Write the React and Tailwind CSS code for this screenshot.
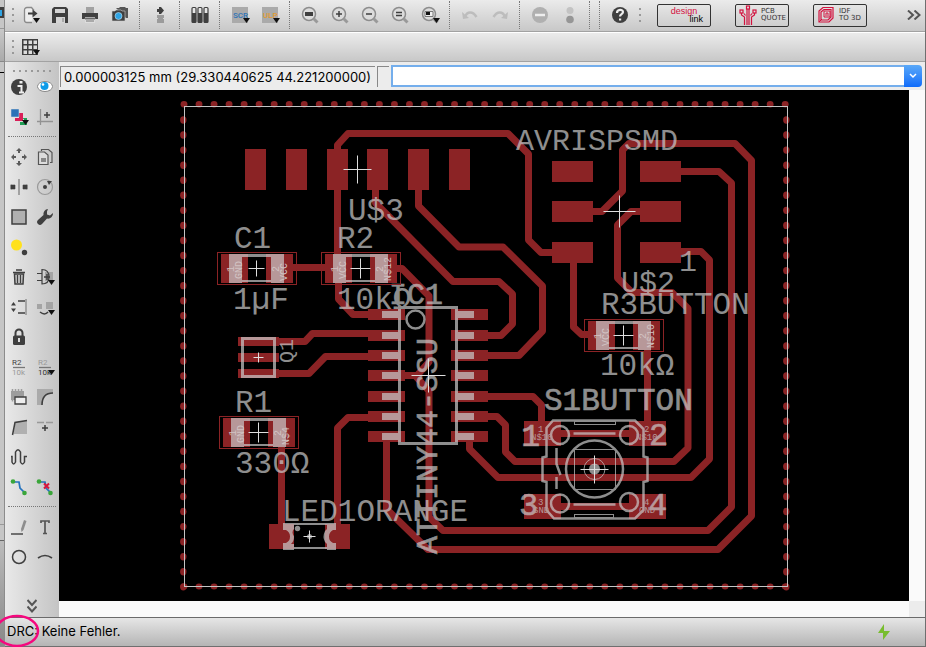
import React, { useState } from 'react';

const DARK = '#3f3f3f';
const COPPER = '#8b2325';
const SILK = '#cacaca';

const Arrow = () => <path d="M15 15h7l-3.500 5z" fill="#111" />;

const Lens = ({ children }) => (
  <>
    <circle cx="11" cy="11" r="6.500" fill="#dcdcdc" stroke="#8d8d8d" strokeWidth="1.500" />
    <path d="M15.500 15.500l4 4" stroke="#999" strokeWidth="3" />
    {children}
  </>
);

const icons = {
  open: (
    <>
      <path d="M16 7.500L13.500 4.500H9A2.500 2.500 0 0 0 6.500 7v10A2.500 2.500 0 0 0 9 19.500h5" fill="#eee" stroke="#8a8a8a" strokeWidth="1.300" />
      <path d="M10 10.500h5" stroke={DARK} strokeWidth="2" />
      <path d="M14.500 6.500l5 4-5 4z" fill={DARK} />
      <Arrow />
    </>
  ),
  save: (
    <>
      <path d="M6 4h12l2 2v14H4V6z" fill={DARK} />
      <path d="M7 6h10v4H7zM8 14h9v6H8z" fill="#d5d5d5" />
      <path d="M14 15h2v4h-2z" fill="#aaa" />
    </>
  ),
  print: (
    <>
      <path d="M8 4h8v6H8z" fill="#a2a2a2" />
      <path d="M4 10h16v6H4z" fill={DARK} />
      <path d="M7 14h10v6H7z" fill="#ddd" />
      <path d="M7 15h10v1H7zM8 18h8" fill={DARK} stroke="#777" />
    </>
  ),
  camera: (
    <>
      <path d="M8 5h3l1-1h5l1 1h2v10h-2" fill="#555" />
      <path d="M4 8h3l1-1h5l1 1h3v10H4z" fill={DARK} stroke="#ccc" strokeWidth=".600" />
      <circle cx="10.500" cy="13" r="3.500" fill="#2fa4e4" stroke="#c9e4f4" strokeWidth=".600" />
    </>
  ),
  board: (
    <>
      <path d="M9 6h2V4h2l3 3.500-3 3.500h-2V9H9z" fill={DARK} />
      <path d="M9 12h7v3H9zM9 16h7v4H9z" fill="#9b9b9b" />
      <path d="M10 14.500h5v2h-5z" fill="#9b9b9b" />
    </>
  ),
  library: (
    <>
      {[5, 11, 17].map(x => (
        <g key={x}>
          <rect x={x - 1} y="4.500" width="4" height="15" rx="1" fill="#e6e6e6" stroke={DARK} strokeWidth="1.200" />
          <rect x={x - 1} y="10" width="4" height="9.500" fill={DARK} />
        </g>
      ))}
    </>
  ),
  scr: (
    <>
      <path d="M4 4h16v16H4z" fill="#aaa" />
      <text x="5" y="15" fontSize="8" fontWeight="500" fill="#2b73b8" fontFamily="Roboto, sans-serif">SCR</text>
      <Arrow />
    </>
  ),
  ulp: (
    <>
      <path d="M4 4h16v16H4z" fill="#aaa" />
      <text x="5" y="15" fontSize="8" fontWeight="500" fill="#e39a2d" fontFamily="Roboto, sans-serif">ULP</text>
      <Arrow />
    </>
  ),
  zoomFit: <Lens><path d="M7 9h8v4H7z" fill={DARK} /></Lens>,
  zoomIn: <Lens><path d="M8 11h6M11 8v6" stroke={DARK} strokeWidth="1.500" /></Lens>,
  zoomOut: <Lens><path d="M8 11h6" stroke={DARK} strokeWidth="1.500" /></Lens>,
  zoomRedraw: <Lens><path d="M8 9.500h6M8 12.500h6" stroke={DARK} strokeWidth="1.300" /></Lens>,
  zoomSelect: (
    <>
      <Lens><path d="M7 8.500h8v5H7z" fill="#eee" stroke="#777" /><path d="M8 9h4v3H8z" fill="#111" /></Lens>
      <Arrow />
    </>
  ),
  undo: (
    <>
      <path d="M4 9l1 7 6-1z" fill="#bdbdbd" />
      <path d="M7 14c2-6 8-6 11.500 0" fill="none" stroke="#bdbdbd" strokeWidth="2.500" />
    </>
  ),
  redo: (
    <>
      <path d="M20 9l-1 7-6-1z" fill="#bdbdbd" />
      <path d="M17 14c-2-6-8-6-11.500 0" fill="none" stroke="#bdbdbd" strokeWidth="2.500" />
    </>
  ),
  stop: (
    <>
      <circle cx="12" cy="12" r="8" fill="#b0b0b0" />
      <path d="M7 12h10" stroke="#eee" strokeWidth="2.500" />
    </>
  ),
  go: (
    <>
      <circle cx="12" cy="7.500" r="3.500" fill="#c3c3c3" />
      <circle cx="12" cy="16.500" r="3.800" fill="#969696" />
    </>
  ),
  help: (
    <>
      <circle cx="12" cy="12" r="8" fill={DARK} />
      <path d="M9 10c0-4 6-4 6-1 0 2.200-3 2-3 4.500" fill="none" stroke="#eee" strokeWidth="2.200" />
      <path d="M11 15.500h2.200v2H11z" fill="#eee" />
    </>
  ),
  grid: (
    <>
      <path d="M4 4h16v16H4z" fill={DARK} />
      {[6, 11, 16].map(x => [6, 11, 16].map(y => (
        <rect key={`${x}-${y}`} x={x - 0.5} y={y - 0.5} width="3.500" height="3.500" fill="#ddd" />
      )))}
      <Arrow />
    </>
  ),
  info: (
    <>
      <circle cx="12" cy="12" r="8" fill={DARK} />
      <path d="M12.500 6h3v2.500h-3z" fill="#eee" />
      <path d="M10.500 11h4v6M12 17.500h5" fill="none" stroke="#eee" strokeWidth="2" />
    </>
  ),
  show: (
    <>
      <ellipse cx="12" cy="11.500" rx="7.500" ry="5" fill="#fff" stroke="#888" />
      <circle cx="11.500" cy="11" r="4" fill="#0d9be8" />
      <circle cx="10" cy="9.500" r="1.300" fill="#fff" />
    </>
  ),
  layers: (
    <>
      <path d="M13 14h4v3h-4v3h7v-7h-3" fill="#1f9d55" />
      <path d="M8 16V13h4V8h4v8z" fill="#d91f58" />
      <path d="M4 4h8v8H4z" fill="#2b73b8" stroke="#ddd" strokeWidth=".500" />
      <Arrow />
    </>
  ),
  mark: (
    <>
      <path d="M7.500 4v16M4 16.500h16" stroke="#929292" strokeWidth="1.300" />
      <path d="M14 7v6M11 10h6" stroke={DARK} strokeWidth="1.500" />
    </>
  ),
  move: (
    <path d="M12 3l3 3h-2v2h-2V6H9zM12 21l3-3h-2v-2h-2v2H9zM4 12l3-3v2h2v2H7v2zM20 12l-3-3v2h-2v2h2v2z" fill="#5a5a5a" />
  ),
  copy: (
    <>
      <path d="M8.500 6V4.500h7l3.500 3v10H17" fill="#ccc" stroke="#555" strokeWidth="1.200" />
      <path d="M5.500 7h6l3.500 3v9.500H5.500z" fill="#ddd" stroke="#555" strokeWidth="1.200" />
      <path d="M8 13h5v4H8z" fill="#888" />
    </>
  ),
  mirror: (
    <>
      <path d="M4 10h4v4H4zM16 10h4v4h-4zM4 9.500v5M20 9.500v5" fill={DARK} stroke={DARK} strokeWidth=".600" />
      <path d="M12 4v16" stroke="#8d8d8d" strokeWidth="1.500" />
    </>
  ),
  rotate: (
    <>
      <circle cx="12" cy="12" r="7.500" fill="none" stroke="#999" strokeWidth="1.200" />
      <circle cx="12" cy="12" r="2" fill={DARK} />
      <path d="M14 6h5l-3 4z" fill={DARK} />
    </>
  ),
  group: <path d="M5 5h14v14H5z" fill="#b0b0b0" stroke={DARK} strokeWidth="1.500" />,
  change: (
    <path d="M15 4a5 5 0 0 0-4.500 6L5 15a2.500 2.500 0 0 0 4 4l5-5.500a5 5 0 0 0 6-5.500l-3 2.500-3-1V6.500z" fill={DARK} />
  ),
  paste: (
    <>
      <circle cx="9.500" cy="10" r="5.500" fill="#ffe11c" />
      <circle cx="17.500" cy="17.500" r="2.700" fill={DARK} />
    </>
  ),
  trash: (
    <>
      <path d="M9 5h6M6 7.500h12" stroke={DARK} strokeWidth="1.600" />
      <path d="M7.500 9h9l-.500 10h-8z" fill="#ccc" stroke={DARK} strokeWidth="1.500" />
      <path d="M10.500 10v8M13.500 10v8" stroke={DARK} strokeWidth="1.300" />
    </>
  ),
  add: (
    <>
      <path d="M12 7h8v9h-8z" fill="#a4a4a4" />
      <path d="M9 4.500c5 0 7 3 7 7.500s-2 7-7 7zM4 8.500h5M4 15.500h5" fill="none" stroke={DARK} strokeWidth="1.200" />
      <path d="M14 9v6M11 12h6" stroke={DARK} strokeWidth="1.500" />
      <Arrow />
    </>
  ),
  pinswap: (
    <>
      <path d="M4 10.500L6.500 7 9 10.500zM4 13.500L6.500 17 9 13.500z" fill={DARK} />
      <path d="M11 6h8M11 18h8" stroke={DARK} strokeWidth="1.500" />
      <path d="M18 4h2v16h-2z" fill="#a4a4a4" />
    </>
  ),
  replace: (
    <>
      <path d="M4 9h5v5H4zM13 7h7v7h-7z" fill="#a4a4a4" />
      <path d="M7 17c3 2.500 6 2.500 8 0" fill="none" stroke={DARK} strokeWidth="1.500" />
      <Arrow />
    </>
  ),
  lock: (
    <>
      <path d="M8.500 11V8a3.500 3.500 0 0 1 7 0v3" fill="none" stroke={DARK} strokeWidth="2" />
      <rect x="6" y="10.500" width="12" height="9.500" rx="1.500" fill={DARK} />
      <path d="M11 13h2v4h-2z" fill="#ddd" />
    </>
  ),
  name: (
    <>
      <text x="5" y="10" fontSize="8" fill="#444" fontFamily="Roboto, sans-serif">R2</text>
      <path d="M6 12.500h12" stroke="#777" strokeWidth="1.300" />
      <text x="5" y="20" fontSize="8" fill="#999" fontFamily="Roboto, sans-serif">10k</text>
    </>
  ),
  value: (
    <>
      <text x="5" y="10" fontSize="8" fill="#999" fontFamily="Roboto, sans-serif">R2</text>
      <path d="M6 12.500h12" stroke="#777" strokeWidth="1.300" />
      <text x="5" y="20" fontSize="8" fill="#333" fontFamily="Roboto, sans-serif">10k</text>
      <Arrow />
    </>
  ),
  smash: (
    <>
      <path d="M4 6h13v9H4z" fill="#9d9d9d" />
      <path d="M5.500 4v3M8.500 4v3M11.500 4v3M14.500 4v3M5.500 14v2.500" stroke="#9d9d9d" strokeWidth="1.500" />
      <path d="M8 12h11v7H8z" fill="#eee" stroke={DARK} strokeWidth="1.300" />
    </>
  ),
  miter: (
    <>
      <path d="M4 4h16v4C13 8 9 12 9 20H4z" fill="#aaa" />
      <path d="M9 20C9 12 12 8 20 8" fill="none" stroke={DARK} strokeWidth="1.600" />
    </>
  ),
  split: (
    <>
      <path d="M6.500 19l2-12L20 5.500V19z" fill="#b0b0b0" />
      <path d="M5.500 20L8 7.500 20 5.500" fill="none" stroke={DARK} strokeWidth="1.500" />
    </>
  ),
  optimize: (
    <>
      <path d="M4 7.500h7M13 7.500h7" stroke="#999" strokeWidth="1.300" />
      <path d="M12 10v6M9 13h6" stroke={DARK} strokeWidth="1.500" />
    </>
  ),
  meander: (
    <path d="M4 11.500h1V17q1.500 4 3.500 0V7q2.500-4.500 5 0v10q2 4 4 0v-5.500H20" fill="none" stroke={DARK} strokeWidth="1.500" />
  ),
  route: (
    <>
      <path d="M6 7h6l1 6 5 5" fill="none" stroke="#2573bd" strokeWidth="1.700" />
      <circle cx="6" cy="6.500" r="2.300" fill="#3aa63a" />
      <circle cx="17.500" cy="18" r="2.300" fill="#3aa63a" />
    </>
  ),
  ripup: (
    <>
      <path d="M6 7h6l1 6 5 5" fill="none" stroke="#2573bd" strokeWidth="1.700" />
      <circle cx="6" cy="6.500" r="2.300" fill="#3aa63a" />
      <circle cx="17.500" cy="18" r="2.300" fill="#3aa63a" />
      <path d="M11 8.500l5 5M16 8.500l-5 5" stroke="#d9163c" strokeWidth="2" />
    </>
  ),
  wire: (
    <>
      <path d="M4 19h12" stroke={DARK} strokeWidth="1.400" />
      <path d="M17 5l2.500 1-3 9-2 2-.500-3z" fill="#8d8d8d" />
    </>
  ),
  text: <path d="M8 8V6h8v2M12 6v12.500M10 18.500h4" fill="none" stroke="#555" strokeWidth="1.700" />,
  circle: <circle cx="12" cy="12" r="6.500" fill="none" stroke={DARK} strokeWidth="1.500" />,
  arc: <path d="M5 13q7-5 14 0" fill="none" stroke={DARK} strokeWidth="1.700" />,
};

function Icon({ name }) {
  return <svg viewBox="0 0 24 24" className="h-6 w-6 shrink-0" aria-hidden="true">{icons[name]}</svg>;
}

function ToolButton({ name, narrow }) {
  return (
    <button type="button" aria-label={name} className={`flex h-[30px] shrink-0 items-center justify-center ${narrow ? 'w-[26px]' : 'w-[30px]'}`}>
      <Icon name={name} />
    </button>
  );
}

const Separator = () => (
  <div className="flex h-[30px] w-[10px] shrink-0 py-px pl-[4px]">
    <div className="h-full border-l border-dotted border-[#777]" />
  </div>
);

const Grip = () => (
  <div className="flex w-[10px] shrink-0 flex-col items-center gap-[4px]">
    {[0, 1, 2].map(i => <div key={i} className="h-[2px] w-[2px] bg-[#999]" />)}
  </div>
);

const toolGroups = [
  ['open', 'save', 'print', 'camera'],
  ['board'],
  ['library'],
  ['scr', 'ulp'],
  ['zoomFit', 'zoomIn', 'zoomOut', 'zoomRedraw', 'zoomSelect'],
  ['undo', 'redo'],
  ['stop', 'go'],
];

function Toolbar() {
  return (
    <div className="flex h-8 shrink-0 items-center overflow-hidden border-b border-[#a2a2a2] bg-linear-to-b from-[#ebebeb] to-[#c8c8c8] pb-px">
      <div className="flex pl-[3px]"><Grip /></div>
      <div className="flex min-w-0 items-center">
        {toolGroups.map((group, i) => (
          <div key={i} className={i === 0 ? '-ml-[3px] flex' : 'flex'}>
            {group.map(name => <ToolButton key={name} name={name} />)}
            <Separator />
          </div>
        ))}
        <Separator />
        <ToolButton name="help" />
        <Grip />
      </div>
      <div className="ml-[12px] flex gap-6 text-[7px] leading-[7px] text-[#333]">
        <button type="button" className="flex h-[23px] w-[54px] flex-col justify-center rounded-[2px] border border-[#333] px-[7px] font-[Liberation_Sans,sans-serif] text-[9px] leading-[8px]">
          <span className="text-[#d3123f]">design</span>
          <span className="self-end text-black">link</span>
        </button>
        <button type="button" className="flex h-[23px] w-[54px] items-center gap-[4px] rounded-[2px] border border-[#333] pl-[3px] text-left font-[DejaVu_Sans,sans-serif]">
          <svg viewBox="0 0 18 20" className="h-5 w-[18px] shrink-0" fill="none" stroke="#d3123f" strokeWidth="1.200" aria-hidden="true">
            <rect x="1" y="5" width="3" height="3" />
            <rect x="7.500" y="1" width="3" height="3" />
            <rect x="14" y="5" width="3" height="3" />
            <path d="M2.500 8v2l3 2v8M8 4v16M10 4v16M15.500 8v2l-3 2v8M5 8.500l1.500 2M13 8.500l-1.500 2" />
          </svg>
          <span>PCB<br />QUOTE</span>
        </button>
        <button type="button" className="flex h-[23px] w-[54px] items-center gap-[4px] rounded-[2px] border border-[#333] pl-[3px] text-left font-[DejaVu_Sans,sans-serif]">
          <svg viewBox="0 0 18 20" className="h-5 w-[18px] shrink-0" fill="none" stroke="#d3123f" aria-hidden="true">
            <path d="M2 6l4-3.500h10V13l-4 4H2zM4 7l3-2.500h7V12l-3 3H4z" strokeWidth="1.200" />
            <path d="M7 6h6v6H7zM9 8v3M9 8h2v3" />
            <path d="M2 17l3-3" />
          </svg>
          <span>IDF<br />TO 3D</span>
        </button>
      </div>
      <button type="button" aria-label="More tools" className="mr-[4px] ml-auto">
        <svg viewBox="0 0 14 10" className="h-[10px] w-[14px]" fill="none" stroke="#555" strokeWidth="2"><path d="M1 .500L6 5 1 9.500M7.500 .500L12.500 5l-5 4.500" /></svg>
      </button>
    </div>
  );
}

const paletteGroups = [
  ['info', 'show', 'layers', 'mark'],
  ['move', 'copy', 'mirror', 'rotate', 'group', 'change', 'paste', null, 'trash', 'add', 'pinswap', 'replace', 'lock', null,
    'name', 'value', 'smash', 'miter', 'split', 'optimize', 'meander', null, 'route', 'ripup'],
  ['wire', 'text', 'circle', 'arc'],
];

function Palette() {
  return (
    <div className="flex w-[54px] shrink-0 flex-col items-center bg-linear-to-r from-[#e9e9e9] to-[#c4c4c4]">
      <div className="flex h-[10px] items-end gap-[4px]">
        {[0, 1, 2, 3, 4, 5, 6].map(i => <div key={i} className="h-[2px] w-[2px] bg-[#999]" />)}
      </div>
      {paletteGroups.map((group, i) => (
        <React.Fragment key={i}>
          {i > 0 && <div className="h-[10px] w-full px-[3px] pt-[4px]"><div className="w-full border-t border-dotted border-[#777]" /></div>}
          <div className="grid grid-cols-2">
            {group.map((name, j) => (name ? <ToolButton key={name} name={name} narrow /> : <span key={j} />))}
          </div>
        </React.Fragment>
      ))}
      <button type="button" aria-label="More commands" className="mt-auto mb-1">
        <svg viewBox="0 0 10 14" className="h-[14px] w-[10px]" fill="none" stroke="#555" strokeWidth="2"><path d="M.500 1L5 6l4.500-5M.500 7.500L5 12.500l4.500-5" /></svg>
      </button>
    </div>
  );
}

// Copper traces, in board window coordinates
const traces = [
  'M337.500 170V145L348 133.500H508L528.500 154V240L541 252.500H560',
  'M337.500 190V268M338.500 268V299L353 314.500H372',
  'M375.500 188V203L453 281.500H499L512.500 294V324L501 335.500H480',
  'M418.500 188V206L459 247H503L542.500 286V331L519 355.500H480',
  'M290 267.500H327',
  'M395 268.500H402L429 296V362L417 375.500H398M415 375.500L429 391V517L443 530.500H708L731.500 507V183L719 171.500H675',
  'M386.500 440V509L428 549.500H718L751.500 516V160.500L735 143.500H629L622.500 150V191L602 211.500H585',
  'M650 211.500H631L617.500 225V278L632 292.500H672L688 308.500V448L674 461.500H515L505.500 452V425L497 416.500H480',
  'M675 251.500H701L709.500 260V459L691 477.500H498L469.500 449V436',
  'M480 396.500H533L541.500 405V425',
  'M573.500 255V327L581.500 334.500H592',
  'M647.500 335V425',
  'M555 433.500H640M555 506.500H640',
  'M270 341.500H305L312.500 333.500H374M270 373.500H309L325.500 356.500H374',
  'M281.500 430V530',
  'M374 417.500H348L337.500 428V530',
];

const icRows = [309, 330, 350, 370, 391, 411, 431];

const pads = [
  ...[245, 286, 327, 367, 408, 449].map(x => [x, 149, 21, 41]),
  ...[552, 640].flatMap(x => [161, 201, 242].map(y => [x, y, 41, 21])),
  ...icRows.flatMap(y => [[368, y, 37, 11], [451, y, 37, 11]]),
  ...[337, 353, 369].map(y => [238, y, 41, 9]),
  ...[269, 325].map(x => [x, 524, 25, 25]),
  ...[524, 629].flatMap(x => [421, 494].map(y => [x, y, 37, 25])),
];

const chips = [
  { x: 217, y: 252, left: 'GND', right: 'VCC', arm: 8 },
  { x: 321, y: 252, left: 'VCC', right: 'N$12', arm: 10 },
  { x: 219, y: 416, left: 'GND', right: 'N$4', arm: 10 },
  { x: 584, y: 319, left: 'VCC', right: 'N$10', arm: 10 },
];

const labels = [
  { x: 516, y: 150, size: 30, t: 'AVRISPSMD' },
  { x: 348, y: 220, size: 31, t: 'U$3' },
  { x: 621, y: 292, size: 30, t: 'U$2' },
  { x: 679, y: 271, size: 30, t: '1' },
  { x: 234, y: 248, size: 31, t: 'C1' },
  { x: 233, y: 309, size: 31, t: '1µF' },
  { x: 337, y: 248, size: 31, t: 'R2' },
  { x: 337, y: 309, size: 31, t: '10kΩ' },
  { x: 235, y: 412, size: 31, t: 'R1' },
  { x: 235, y: 473, size: 31, t: '330Ω' },
  { x: 282, y: 521, size: 31, t: 'LED1ORANGE' },
  { x: 601, y: 314, size: 31, t: 'R3BUTTON' },
  { x: 600, y: 375, size: 31, t: '10kΩ' },
  { x: 389, y: 304, size: 30, t: 'IC1', heavy: true },
  { x: 544, y: 410, size: 31, t: 'S1BUTTON', heavy: true },
  { x: 521, y: 446, size: 32, t: '1', heavy: true },
  { x: 649, y: 445, size: 32, t: '2', heavy: true },
  { x: 519, y: 515, size: 32, t: '3', heavy: true },
  { x: 648, y: 515, size: 32, t: '4', heavy: true },
];

const Cross = ({ x, y, r }) => <path d={`M${x - r} ${y}H${x + r}M${x} ${y - r}V${y + r}`} stroke="#dedede" strokeWidth="1" />;

const range = n => Array.from({ length: n }, (_, i) => i);

function Board() {
  return (
    <svg className="h-full w-full bg-black font-[Liberation_Mono,monospace]" role="img" aria-label="Board layout">
      <g transform="translate(-59 -90)">
        <g fill={COPPER}>
          {range(41).map(i => (
            <React.Fragment key={i}>
              <ellipse cx={184 + i * 15.03} cy="104.200" rx="3.400" ry="3.200" />
              <ellipse cx={184 + i * 15.03} cy="586.500" rx="3.400" ry="3" />
            </React.Fragment>
          ))}
          {range(32).map(i => (
            <React.Fragment key={i}>
              <ellipse cx="183.300" cy={120 + i * 15.06} rx="3.200" ry="3.700" />
              <ellipse cx="786.300" cy={120 + i * 15.06} rx="3.200" ry="3.700" />
            </React.Fragment>
          ))}
          {pads.map(([x, y, w, h]) => <rect key={`${x}-${y}`} x={x} y={y} width={w} height={h} />)}
          {chips.map(c => (
            <React.Fragment key={`${c.x}-${c.y}`}>
              <rect x={c.x + 4} y={c.y + 2} width="27" height="29" />
              <rect x={c.x + 49} y={c.y + 2} width="27" height="29" />
            </React.Fragment>
          ))}
        </g>
        <g fill="none" stroke={COPPER} strokeWidth="7" strokeLinejoin="round">
          {traces.map(d => <path key={d} d={d} />)}
        </g>
        <rect x="184.500" y="106.500" width="603" height="480" fill="none" stroke="#c4c4c4" />

        {/* silkscreen */}
        <g opacity=".700" fill={SILK} stroke="none">
          {chips.map(c => (
            <g key={`${c.x}-${c.y}`}>
              <rect x={c.x + 12} y={c.y + 2} width="13" height="29" />
              <rect x={c.x + 54} y={c.y + 2} width="13" height="29" />
              <rect x={c.x + 25} y={c.y + 2} width="29" height="3" />
              <rect x={c.x + 25} y={c.y + 28} width="29" height="2" />
            </g>
          ))}
          {icRows.map(y => (
            <React.Fragment key={y}>
              <rect x="382" y={y + 2} width="17" height="7" />
              <rect x="457" y={y + 2} width="17" height="7" />
            </React.Fragment>
          ))}
          <path d="M283 523h11v6q-3 3 0 7.500 0 5-3 7.500h3v6h-11v-7h3q4-2 4-6.500t-4-6.500h-3zM336 523h-9v6l-2 2q-3 6 0 11l2 2v6h9v-7h-3q-4-2-4-6.500t4-6.500h3z" />
          <circle cx="297.500" cy="528.500" r="2.700" />
          <circle cx="309.500" cy="536.500" r="2.500" />
          <circle cx="594.500" cy="469" r="5.500" />
          <g fill="none" stroke={SILK} strokeWidth="3">
            <rect x="399.500" y="307.500" width="57" height="136" />
            <rect x="242.500" y="338.500" width="32" height="38" />
          </g>
          <g fill="none" stroke={SILK} strokeWidth="2.500">
            <circle cx="415.500" cy="319.500" r="9" />
            <path d="M294 524h33M294 548h33" strokeWidth="2" />
            <path d="M553 420.500H635L643.500 429V456.500L647.500 457.500V481L643.500 482V510L635 518.500H554L546.500 510V482L542.500 481V457.500L546.500 456.500V428z" />
            <circle cx="560" cy="435" r="9" />
            <circle cx="629" cy="435" r="9" />
            <circle cx="560" cy="503.500" r="9" />
            <circle cx="629" cy="502" r="9" />
            <circle cx="594.500" cy="469" r="28.500" />
            <path d="M573.500 433.500h42M573.500 504.500h42M556.500 448v16l4 11M556.500 477v12" />
          </g>
          <g fill="none" stroke={SILK} strokeWidth="1">
            <rect x="574.500" y="449.500" width="41" height="40" />
            <rect x="574.500" y="421.500" width="41" height="3" />
            <rect x="574.500" y="514.500" width="39" height="3" />
            <circle cx="594.500" cy="469" r="10.500" />
          </g>
          {labels.map(l => (
            <text key={`${l.x}-${l.y}`} x={l.x} y={l.y} fontSize={l.size} stroke={l.heavy ? SILK : 'none'} strokeWidth=".600">{l.t}</text>
          ))}
          <text transform="translate(437 554) rotate(-90)" fontSize="30" stroke={SILK} strokeWidth=".600">ATTINY44-SSU</text>
          <text transform="translate(293 363) rotate(-90)" fontSize="20">Q1</text>
        </g>

        {chips.map(c => (
          <g key={`${c.x}-${c.y}`}>
            <rect x={c.x + 0.5} y={c.y + 0.5} width="79" height="32" fill="none" stroke={COPPER} />
            <g fill="#d2c3c3" fontSize="10">
              <text transform={`translate(${c.x + 17} ${c.y + 20}) rotate(-90)`}>1</text>
              <text transform={`translate(${c.x + 25} ${c.y + 27}) rotate(-90)`}>{c.left}</text>
              <text transform={`translate(${c.x + 62} ${c.y + 20}) rotate(-90)`}>2</text>
              <text transform={`translate(${c.x + 70} ${c.y + 29}) rotate(-90)`}>{c.right}</text>
            </g>
            <Cross x={c.x + 39.5} y={c.y + 16.5} r={c.arm} />
          </g>
        ))}
        <g fill="#b79999" fontSize="9">
          <text x="538" y="432">1</text>
          <text x="531" y="440">N$10</text>
          <text x="644" y="432">2</text>
          <text x="636" y="440">N$10</text>
          <text x="538" y="505">3</text>
          <text x="533" y="513">GND</text>
          <text x="644" y="505">4</text>
          <text x="639" y="513">GND</text>
        </g>
        <Cross x={357.5} y={169.5} r={14} />
        <Cross x={619.5} y={211.5} r={16} />
        <Cross x={428.5} y={375.5} r={17} />
        <Cross x={258.5} y={357.5} r={5} />
        <Cross x={309.5} y={536.5} r={6} />
        <Cross x={594.5} y={469.5} r={14} />
      </g>
    </svg>
  );
}

export default function App() {
  const [command, setCommand] = useState('');

  return (
    <div className="flex h-screen overflow-hidden bg-[#6f6f6f] font-[Inter,sans-serif] text-[13px] text-black">
      {/* window behind */}
      <div className="flex w-[5px] shrink-0 flex-col border-r border-[#8c8c8c] bg-[#c6c6c6]">
        <div className="h-[7px]" />
        <div className="flex h-[11px] items-center bg-[#3f3f3f]"><div className="h-[6px] w-[2px] bg-[#2fa4e4]" /></div>
        <div className="h-[11px] border-b border-[#999]" />
        <div className="h-[33px] border-b border-[#888] bg-linear-to-b from-[#c8c8c8] to-[#aaa]" />
        <div className="h-[11px] border-b border-black" />
        <div className="h-[452px] border-b border-[#999]" />
        <div className="h-[16px] border-b border-[#666]" />
        <div className="flex-1 bg-linear-to-b from-[#bbb] to-[#888]" />
      </div>

      <div className="mr-px mb-px flex min-w-0 flex-1 flex-col bg-[#ececec]">
        <Toolbar />
        <div className="flex h-[30px] shrink-0 items-center border-t border-b border-t-white border-b-[#a2a2a2] bg-linear-to-b from-[#ebebeb] to-[#c8c8c8]">
          <div className="flex pl-[3px]"><Grip /></div>
          <div className="-ml-[3px] flex"><ToolButton name="grid" /></div>
        </div>

        <div className="flex min-h-0 flex-1">
          <Palette />
          <div className="flex min-w-0 flex-1 flex-col">
            <div className="flex h-7 shrink-0 items-center gap-[2px] pr-[3px] pl-px">
              <output className="h-[21px] shrink-0 border-t border-l border-[#888] pr-[4px] pl-[3px] leading-[20px] whitespace-nowrap">
                0.000003125 mm (29.330440625 44.221200000)
              </output>
              <div className="h-[21px] w-[12px] shrink-0 border-t border-l border-[#888]" />
              <div className="flex h-[22px] min-w-0 flex-1">
                <input
                  aria-label="Command line"
                  value={command}
                  onChange={e => setCommand(e.target.value)}
                  className="min-w-0 flex-1 border-2 border-r-0 border-[#74aeec] bg-white px-1 outline-none"
                />
                <button type="button" aria-label="Command history" className="flex w-[18px] items-center justify-center rounded-r-[4px] bg-linear-to-b from-[#5aa8f8] to-[#0d6bfa]">
                  <svg viewBox="0 0 8 6" className="h-[6px] w-2" fill="none" stroke="#fff" strokeWidth="1.500"><path d="M1 1l3 3 3-3" /></svg>
                </button>
              </div>
            </div>
            <div className="flex min-h-0 flex-1">
              <div className="min-w-0 flex-1 overflow-hidden"><Board /></div>
              <div className="w-4 bg-[#fafafa]" />
            </div>
            <div className="flex h-4 shrink-0">
              <div className="flex-1 bg-[#fafafa]" />
              <div className="w-4 bg-[#ececec]" />
            </div>
          </div>
        </div>

        <footer className="relative flex h-[29px] shrink-0 items-center justify-between border-t border-[#6b6b6b] bg-linear-to-b from-[#e6e6e6] to-[#b5b5b5] pr-[34px] pl-[2px]">
          <span>DRC: Keine Fehler.</span>
          <svg viewBox="0 0 14 18" className="h-[18px] w-[14px]" aria-hidden="true"><path d="M7 1L1 10h5v7l7-9H7z" fill="#78bd2e" /></svg>
          <svg viewBox="0 0 46 34" className="absolute -top-[4px] -left-[11px] h-[34px] w-[46px]" aria-hidden="true">
            <ellipse cx="23" cy="17" rx="21" ry="15" fill="none" stroke="#f5087e" strokeWidth="2.500" />
          </svg>
        </footer>
      </div>
    </div>
  );
}
